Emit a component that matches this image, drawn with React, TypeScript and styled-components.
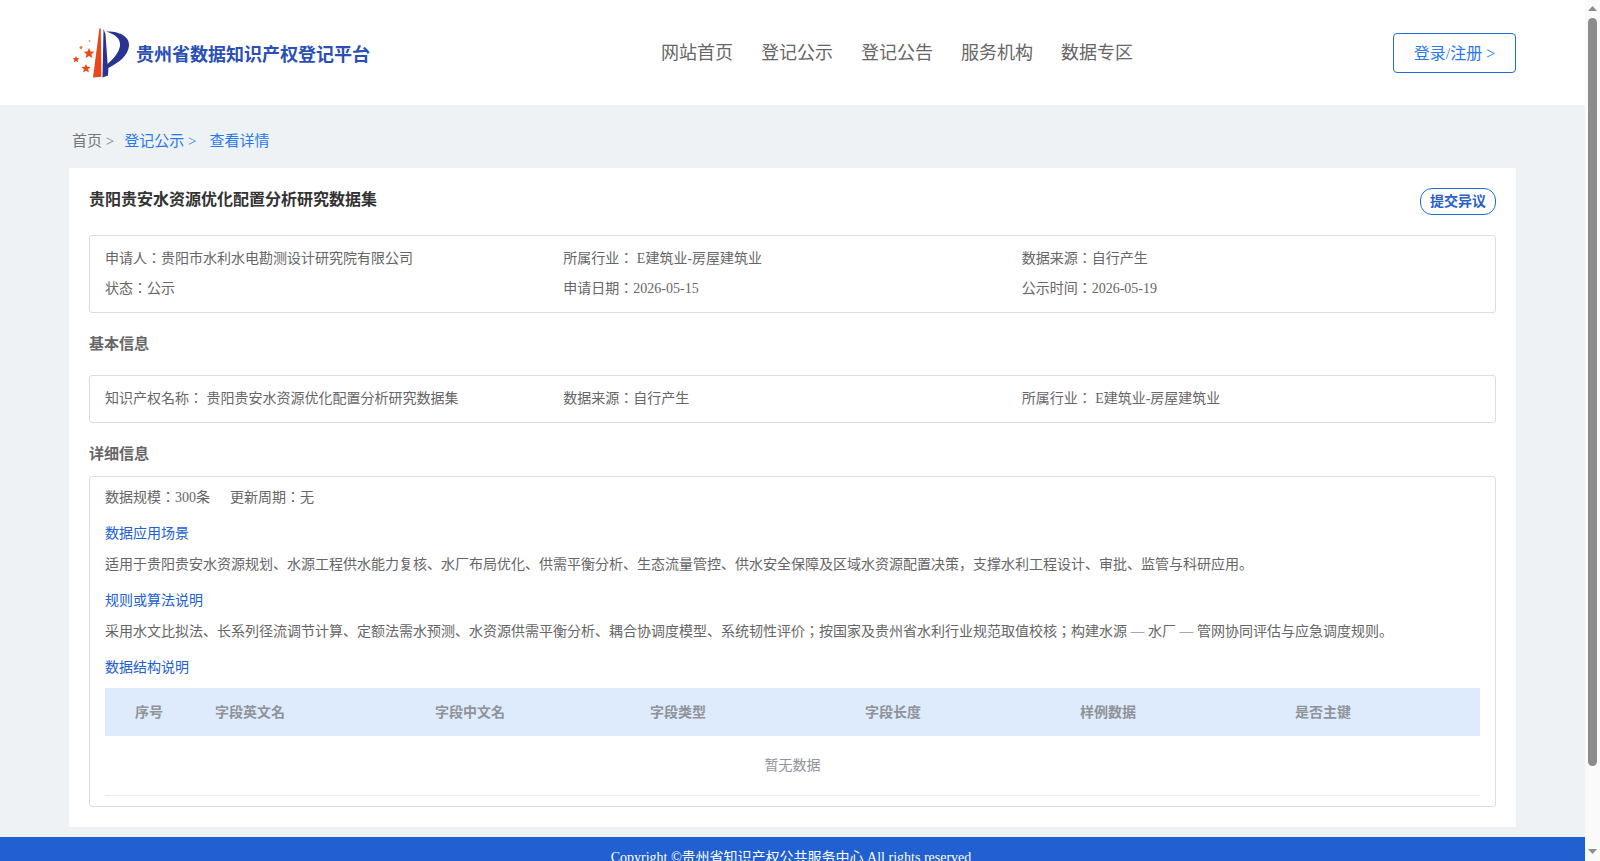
import React from 'react';
import styled, { createGlobalStyle } from 'styled-components';

const GlobalStyle = createGlobalStyle`
    html, body {
        height: 100%;
    }
    body {
        margin: 0;
        overflow: hidden;
        background: #eef2f5;
        font-family: "Liberation Serif", "Noto Sans CJK JP", serif;
        font-size: 14px;
        color: #666;
    }
`;

const navItems = ['网站首页', '登记公示', '登记公告', '服务机构', '数据专区'];
const columns = ['序号', '字段英文名', '字段中文名', '字段类型', '字段长度', '样例数据', '是否主键'];

const Logo = () => (
    <LogoSvg viewBox="0 0 60 50">
        <path d="M29.4 0.5 L30.8 0.5 L31.4 48.8 L23 49.5 Z" fill="#e8481a" />
        <path d="M33.5 1 L32.5 49.5 L38 47.5 L38.4 40 C48 35 58 28 59 18 C60 9 50 3 36 3.5 C44 6 51 10 50 18 C49 25 42 32 37.6 36 L35.5 6 Z" fill="#2a3390" />
        <path d="M19 20 L20.5 23.4 L24.5 23.7 L21.4 26.2 L22.5 30 L19 28 L15.5 30 L16.6 26.2 L13.5 23.7 L17.5 23.4 Z" fill="#e8481a" />
        <path d="M6 28 L7 30 L9.4 30.2 L7.6 31.8 L8.2 34.2 L6 33 L3.8 34.2 L4.4 31.8 L2.6 30.2 L5 30 Z" fill="#e8481a" />
        <path d="M16 36 L17.3 38.8 L20.6 39.1 L18.1 41.2 L19 44.4 L16 42.7 L13 44.4 L13.9 41.2 L11.4 39.1 L14.7 38.8 Z" fill="#e8481a" />
        <circle cx="11" cy="19.5" r="1.5" fill="#ee7a4e" />
        <circle cx="19.5" cy="13" r="1" fill="#f2a07f" />
    </LogoSvg>
);

const App: React.FC = () => {
    return (
        <Shell>
            <GlobalStyle />
            <Page>
                <Header>
                    <Brand>
                        <Logo />
                        <BrandName>贵州省数据知识产权登记平台</BrandName>
                    </Brand>
                    <Nav>
                        {navItems.map((item) => (
                            <NavLink key={item}>{item}</NavLink>
                        ))}
                    </Nav>
                    <LoginButton>登录/注册 &gt;</LoginButton>
                </Header>

                <Main>
                    <Breadcrumb>
                        <Crumb>首页 &gt;</Crumb>
                        <Crumb $active>登记公示 &gt;</Crumb>
                        <Crumb $active>查看详情</Crumb>
                    </Breadcrumb>

                    <Card>
                        <TitleRow>
                            <Title>贵阳贵安水资源优化配置分析研究数据集</Title>
                            <DisputeButton>提交异议</DisputeButton>
                        </TitleRow>

                        <InfoBox>
                            <InfoGrid>
                                <span>申请人：贵阳市水利水电勘测设计研究院有限公司</span>
                                <span>所属行业： E建筑业-房屋建筑业</span>
                                <span>数据来源：自行产生</span>
                                <span>状态：公示</span>
                                <span>申请日期：2026-05-15</span>
                                <span>公示时间：2026-05-19</span>
                            </InfoGrid>
                        </InfoBox>

                        <SectionTitle>基本信息</SectionTitle>
                        <InfoBox>
                            <InfoGrid>
                                <span>知识产权名称： 贵阳贵安水资源优化配置分析研究数据集</span>
                                <span>数据来源：自行产生</span>
                                <span>所属行业： E建筑业-房屋建筑业</span>
                            </InfoGrid>
                        </InfoBox>

                        <SectionTitle $tight>详细信息</SectionTitle>
                        <DetailBox>
                            <ScaleRow>
                                <span>数据规模：300条</span>
                                <span>更新周期：无</span>
                            </ScaleRow>
                            <SubTitle>数据应用场景</SubTitle>
                            <Paragraph>适用于贵阳贵安水资源规划、水源工程供水能力复核、水厂布局优化、供需平衡分析、生态流量管控、供水安全保障及区域水资源配置决策，支撑水利工程设计、审批、监管与科研应用。</Paragraph>
                            <SubTitle>规则或算法说明</SubTitle>
                            <Paragraph>采用水文比拟法、长系列径流调节计算、定额法需水预测、水资源供需平衡分析、耦合协调度模型、系统韧性评价；按国家及贵州省水利行业规范取值校核；构建水源 — 水厂 — 管网协同评估与应急调度规则。</Paragraph>
                            <SubTitle>数据结构说明</SubTitle>
                            <FieldTable>
                                <thead>
                                    <tr>
                                        {columns.map((col) => (
                                            <FieldHead key={col}>{col}</FieldHead>
                                        ))}
                                    </tr>
                                </thead>
                                <tbody>
                                    <tr>
                                        <EmptyCell colSpan={columns.length}>暂无数据</EmptyCell>
                                    </tr>
                                </tbody>
                            </FieldTable>
                        </DetailBox>
                    </Card>
                </Main>

                <Footer>Copyright ©贵州省知识产权公共服务中心 All rights reserved</Footer>
            </Page>

            <ScrollRail>
                <RailArrow viewBox="0 0 9 5"><path d="M4.5 0 L9 5 L0 5 Z" /></RailArrow>
                <RailThumb />
                <RailArrow $down viewBox="0 0 9 5"><path d="M0 0 L9 0 L4.5 5 Z" /></RailArrow>
            </ScrollRail>
        </Shell>
    );
};

export default App;

const Shell = styled.div`
    height: 861px;
    display: flex;
    overflow: hidden;
`;

const Page = styled.div`
    flex: 1;
    min-width: 0;
    overflow: hidden;
`;

const ScrollRail = styled.div`
    width: 15px;
    flex: none;
    background: #fafafa;
    display: flex;
    flex-direction: column;
    align-items: center;
`;

const RailArrow = styled.svg<{ $down?: boolean }>`
    width: 9px;
    height: 5px;
    flex: none;
    margin: ${(p) => (p.$down ? '83px 0 0' : '6px 0 7px')};
    fill: #8c8c8c;
`;

const RailThumb = styled.div`
    width: 9px;
    height: 748px;
    flex: none;
    background: #8c8c8c;
    border-radius: 5px;
`;

const Header = styled.header`
    height: 105px;
    padding: 0 69px;
    background: #fff;
    display: flex;
    align-items: center;
`;

const Brand = styled.div`
    width: 591px;
    margin-left: 1px;
    display: flex;
    align-items: center;
    gap: 6px;
    padding-top: 1px;
`;

const LogoSvg = styled.svg`
    width: 60px;
    height: 50px;
    flex: none;
`;

const BrandName = styled.span`
    font-size: 18px;
    font-weight: bold;
    color: #2a4fb5;
`;

const Nav = styled.nav`
    flex: 1;
    display: flex;
    gap: 28px;
    margin-bottom: 3px;
`;

const NavLink = styled.a`
    font-size: 18px;
    color: #666;
`;

const LoginButton = styled.button`
    width: 123px;
    height: 40px;
    padding: 0 0 2px;
    background: #fff;
    border: 1px solid #1f6ae0;
    border-radius: 4px;
    font-family: inherit;
    font-size: 16px;
    color: #2a78ee;
`;

const Main = styled.main`
    padding: 0 69px 10px;
`;

const Breadcrumb = styled.div`
    height: 63px;
    padding: 6px 3px 0;
    box-sizing: border-box;
    display: flex;
    align-items: center;
    gap: 10px;
    font-size: 15px;
`;

const Crumb = styled.span<{ $active?: boolean }>`
    color: ${(p) => (p.$active ? '#2a78ee' : '#777')};
    margin-right: ${(p) => (p.$active ? 3 : 0)}px;
`;

const Card = styled.section`
    background: #fff;
    padding: 20px;
`;

const TitleRow = styled.div`
    height: 47px;
    display: flex;
    justify-content: space-between;
    align-items: flex-start;
`;

const Title = styled.h1`
    margin: 0;
    font-size: 16px;
    line-height: 24px;
    font-weight: bold;
    color: #333;
`;

const DisputeButton = styled.button`
    width: 76px;
    height: 27px;
    padding: 0 0 3px;
    background: #fff;
    border: 1px solid #1f6ae0;
    border-radius: 12px;
    font-family: inherit;
    font-size: 14px;
    font-weight: bold;
    color: #2a5fc8;
`;

const InfoBox = styled.div`
    border: 1px solid #ddd;
    border-radius: 3px;
    padding: 6px 15px 10px;
`;

const InfoGrid = styled.div`
    display: grid;
    grid-template-columns: repeat(3, 1fr);
    grid-auto-rows: 30px;
    align-items: center;
    color: #666;
`;

const SectionTitle = styled.h2<{ $tight?: boolean }>`
    margin: 0;
    box-sizing: border-box;
    height: ${(p) => (p.$tight ? 53 : 62)}px;
    padding: ${(p) => (p.$tight ? '5px 0 0' : '0 0 3px')};
    display: flex;
    align-items: center;
    font-size: 15px;
    font-weight: bold;
    color: #666;
`;

const DetailBox = styled.div`
    border: 1px solid #ddd;
    border-radius: 3px;
    padding: 5px 15px 10px;
`;

const ScaleRow = styled.div`
    height: 32px;
    box-sizing: border-box;
    padding-bottom: 4px;
    display: flex;
    align-items: center;
    gap: 20px;
`;

const SubTitle = styled.div`
    height: 35px;
    display: flex;
    align-items: center;
    color: #2060d0;
`;

const Paragraph = styled.p`
    margin: 0;
    height: 32px;
    box-sizing: border-box;
    padding-bottom: 4px;
    display: flex;
    align-items: center;
    color: #666;
`;

const FieldTable = styled.table`
    width: 100%;
    margin-top: 5px;
    border-collapse: collapse;
    table-layout: fixed;
`;

const FieldHead = styled.th`
    height: 48px;
    padding: 0 0 3px 10px;
    box-sizing: border-box;
    background: #deebfd;
    font-size: 14px;
    font-weight: bold;
    text-align: left;
    color: #909399;

    &:nth-child(1) { width: 100px; padding-left: 30px; }
    &:nth-child(2) { width: 220px; }
    &:nth-child(3) { width: 215px; }
    &:nth-child(4) { width: 215px; }
    &:nth-child(5) { width: 215px; }
    &:nth-child(6) { width: 215px; }
`;

const EmptyCell = styled.td`
    height: 59px;
    padding: 0 0 3px;
    box-sizing: border-box;
    border-bottom: 1px solid #ebeef5;
    text-align: center;
    color: #909399;
`;

const Footer = styled.footer`
    height: 115px;
    padding: 13px 3px 0 0;
    box-sizing: border-box;
    background: #2060d0;
    color: #fff;
    font-size: 14px;
    line-height: 16px;
    text-align: center;
`;
